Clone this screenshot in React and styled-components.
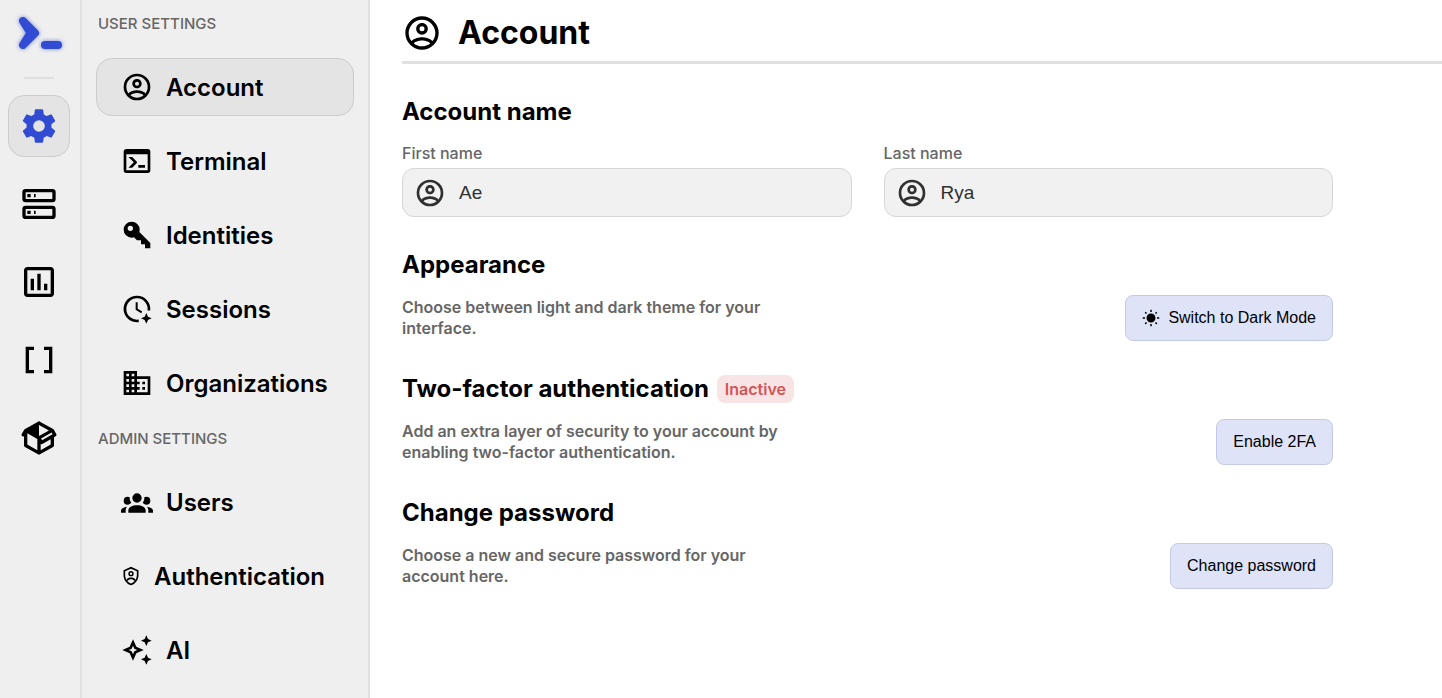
import React from 'react'
import styled, { createGlobalStyle } from 'styled-components';

const icons = {
    account: 'M12,2A10,10 0 0,0 2,12A10,10 0 0,0 12,22A10,10 0 0,0 22,12A10,10 0 0,0 12,2M7.07,18.28C7.5,17.38 10.12,16.5 12,16.5C13.88,16.5 16.5,17.38 16.93,18.28C15.57,19.36 13.86,20 12,20C10.14,20 8.43,19.36 7.07,18.28M18.36,16.83C16.93,15.09 13.46,14.5 12,14.5C10.54,14.5 7.07,15.09 5.64,16.83C4.62,15.5 4,13.82 4,12C4,7.59 7.59,4 12,4C16.41,4 20,7.59 20,12C20,13.82 19.38,15.5 18.36,16.83M12,6C10.06,6 8.5,7.56 8.5,9.5C8.5,11.44 10.06,13 12,13C13.94,13 15.5,11.44 15.5,9.5C15.5,7.56 13.94,6 12,6M12,11A1.5,1.5 0 0,1 10.5,9.5A1.5,1.5 0 0,1 12,8A1.5,1.5 0 0,1 13.5,9.5A1.5,1.5 0 0,1 12,11Z',
    terminal: 'M20,19V7H4V19H20M20,3A2,2 0 0,1 22,5V19A2,2 0 0,1 20,21H4A2,2 0 0,1 2,19V5C2,3.89 2.9,3 4,3H20M13,17V15H18V17H13M9.58,13L5.57,9H8.4L11.7,12.3C12.09,12.69 12.09,13.33 11.7,13.72L8.42,17H5.59L9.58,13Z',
    key: 'M22,18V22H18V19H15V16H12L9.74,13.74C9.19,13.91 8.61,14 8,14A6,6 0 0,1 2,8A6,6 0 0,1 8,2A6,6 0 0,1 14,8C14,8.61 13.91,9.19 13.74,9.74L22,18M7,5A2,2 0 0,0 5,7A2,2 0 0,0 7,9A2,2 0 0,0 9,7A2,2 0 0,0 7,5Z',
    session: 'M12,2A10,10 0 0,1 21.9,13.2H19.9A8,8 0 1,0 13.3,19.9V21.9A10,10 0 1,1 12,2M11,7H12.5V11.8L15.9,13.8L15.1,15.1L11,12.6V7M19,15L20.25,17.75L23,19L20.25,20.25L19,23L17.75,20.25L15,19L17.75,17.75Z',
    organization: 'M18,15H16V17H18M18,11H16V13H18M20,19H12V17H14V15H12V13H14V11H12V9H20M10,7H8V5H10M10,11H8V9H10M10,15H8V13H10M10,19H8V17H10M6,7H4V5H6M6,11H4V9H6M6,15H4V13H6M6,19H4V17H6M12,7V3H2V21H22V7H12Z',
    users: 'M12,5.5A3.5,3.5 0 0,1 15.5,9A3.5,3.5 0 0,1 12,12.5A3.5,3.5 0 0,1 8.5,9A3.5,3.5 0 0,1 12,5.5M5,8C5.56,8 6.08,8.15 6.53,8.42C6.38,9.85 6.8,11.27 7.66,12.38C7.16,13.34 6.16,14 5,14A3,3 0 0,1 2,11A3,3 0 0,1 5,8M19,8A3,3 0 0,1 22,11A3,3 0 0,1 19,14C17.84,14 16.84,13.34 16.34,12.38C17.2,11.27 17.62,9.85 17.47,8.42C17.92,8.15 18.44,8 19,8M5.5,18.25C5.5,16.18 8.41,14.5 12,14.5C15.59,14.5 18.5,16.18 18.5,18.25V20H5.5V18.25M0,20V18.5C0,17.11 1.89,15.94 4.45,15.6C3.86,16.28 3.5,17.22 3.5,18.25V20H0M24,20H20.5V18.25C20.5,17.22 20.14,16.28 19.55,15.6C22.11,15.94 24,17.11 24,18.5V20Z',
    shield: 'M21,11C21,16.55 17.16,21.74 12,23C6.84,21.74 3,16.55 3,11V5L12,1L21,5V11M12,21C15.75,20 19,15.54 19,11.22V6.3L12,3.18L5,6.3V11.22C5,15.54 8.25,20 12,21M12,6A3.2,3.2 0 0,1 15.2,9.2A3.2,3.2 0 0,1 12,12.4A3.2,3.2 0 0,1 8.8,9.2A3.2,3.2 0 0,1 12,6M12,7.8A1.4,1.4 0 0,0 10.6,9.2A1.4,1.4 0 0,0 12,10.6A1.4,1.4 0 0,0 13.4,9.2A1.4,1.4 0 0,0 12,7.8M6.8,16.2C7.6,14.6 10,13.8 12,13.8C14,13.8 16.4,14.6 17.2,16.2L16,17.9C15.2,16.6 13.8,15.8 12,15.8C10.2,15.8 8.8,16.6 8,17.9Z',
    sparkle: 'M19,1L17.74,3.75L15,5L17.74,6.26L19,9L20.25,6.26L23,5L20.25,3.75M9,4L6.5,9.5L1,12L6.5,14.5L9,20L11.5,14.5L17,12L11.5,9.5M9,8.83L10,11L12.17,12L10,13L9,15.17L8,13L5.83,12L8,11M19,15L17.74,17.74L15,19L17.74,20.25L19,23L20.25,20.25L23,19L20.25,17.74Z',
    cog: 'M12,15.5A3.5,3.5 0 0,1 8.5,12A3.5,3.5 0 0,1 12,8.5A3.5,3.5 0 0,1 15.5,12A3.5,3.5 0 0,1 12,15.5M19.43,12.97C19.47,12.65 19.5,12.33 19.5,12C19.5,11.67 19.47,11.34 19.43,11L21.54,9.37C21.73,9.22 21.78,8.95 21.66,8.73L19.66,5.27C19.54,5.05 19.27,4.96 19.05,5.05L16.56,6.05C16.04,5.66 15.5,5.32 14.87,5.07L14.5,2.42C14.46,2.18 14.25,2 14,2H10C9.75,2 9.54,2.18 9.5,2.42L9.13,5.07C8.5,5.32 7.96,5.66 7.44,6.05L4.95,5.05C4.73,4.96 4.46,5.05 4.34,5.27L2.34,8.73C2.21,8.95 2.27,9.22 2.46,9.37L4.57,11C4.53,11.34 4.5,11.67 4.5,12C4.5,12.33 4.53,12.65 4.57,12.97L2.46,14.63C2.27,14.78 2.21,15.05 2.34,15.27L4.34,18.73C4.46,18.95 4.73,19.03 4.95,18.95L7.44,17.94C7.96,18.34 8.5,18.68 9.13,18.93L9.5,21.58C9.54,21.82 9.75,22 10,22H14C14.25,22 14.46,21.82 14.5,21.58L14.87,18.93C15.5,18.67 16.04,18.34 16.56,17.94L19.05,18.95C19.27,19.03 19.54,18.95 19.66,18.73L21.66,15.27C21.78,15.05 21.73,14.78 21.54,14.63L19.43,12.97Z',
    server: 'M4,3H20A2,2 0 0,1 22,5V9A2,2 0 0,1 20,11H4A2,2 0 0,1 2,9V5A2,2 0 0,1 4,3M4,5V9H20V5M5,6H7V8H5M9,6H10V8H9M4,13H20A2,2 0 0,1 22,15V19A2,2 0 0,1 20,21H4A2,2 0 0,1 2,19V15A2,2 0 0,1 4,13M4,15V19H20V15M5,16H7V18H5M9,16H10V18H9Z',
    chart: 'M9,17H7V10H9V17M13,17H11V7H13V17M17,17H15V13H17V17M19,19H5V5H19V19M19,3H5C3.9,3 3,3.9 3,5V19C3,20.1 3.9,21 5,21H19C20.1,21 21,20.1 21,19V5C21,3.9 20.1,3 19,3Z',
    brackets: 'M15,4V6H18V18H15V20H20V4M4,4V20H9V18H6V6H9V4H4Z',
    box: 'M2,10.96C1.5,10.68 1.35,10.07 1.63,9.59L3.13,7C3.24,6.8 3.41,6.66 3.6,6.58L11.43,2.18C11.59,2.06 11.79,2 12,2C12.21,2 12.41,2.06 12.57,2.18L20.47,6.62C20.66,6.72 20.82,6.88 20.91,7.08L22.36,9.6C22.64,10.08 22.47,10.69 22,10.96L21,11.54V16.5C21,16.88 20.79,17.21 20.47,17.38L12.57,21.82C12.41,21.94 12.21,22 12,22C11.79,22 11.59,21.94 11.43,21.82L3.53,17.38C3.21,17.21 3,16.88 3,16.5V10.96C2.7,11.13 2.32,11.14 2,10.96M12,4.15L12,10.85L17.96,7.5L12,4.15M5,15.91L11,19.29V12.58L5,9.21V15.91M19,15.91V12.69L14,15.59C13.67,15.77 13.3,15.76 13,15.6V19.29L19,15.91M13.85,13.36L20.13,9.73L19.55,8.72L13.27,12.35L13.85,13.36Z',
    sun: 'M3.55,19.09L4.96,20.5L6.76,18.71L5.34,17.29M12,6C8.69,6 6,8.69 6,12S8.69,18 12,18 18,15.31 18,12C18,8.68 15.31,6 12,6M20,13H23V11H20M17.24,18.71L19.04,20.5L20.45,19.09L18.66,17.29M20.45,5L19.04,3.6L17.24,5.39L18.66,6.81M13,1H11V4H13M6.76,5.39L4.96,3.6L3.55,5L5.34,6.81L6.76,5.39M1,13H4V11H1M13,20H11V23H13',
}

const railItems = [
    { icon: 'cog', label: 'Settings', active: true },
    { icon: 'server', label: 'Servers' },
    { icon: 'chart', label: 'Monitoring' },
    { icon: 'brackets', label: 'Snippets' },
    { icon: 'box', label: 'Apps' },
]

const userPages = [
    { icon: 'account', label: 'Account', active: true },
    { icon: 'terminal', label: 'Terminal' },
    { icon: 'key', label: 'Identities' },
    { icon: 'session', label: 'Sessions' },
    { icon: 'organization', label: 'Organizations' },
]

const adminPages = [
    { icon: 'users', label: 'Users' },
    { icon: 'shield', label: 'Authentication', iconSize: 20 },
    { icon: 'sparkle', label: 'AI' },
]

function Icon({ name, size = 32 }) {
    return (
        <StyledIcon viewBox="0 0 24 24" width={size} height={size} aria-hidden="true">
            <path fillRule="evenodd" d={icons[name]} />
        </StyledIcon>
    )
}

function Logo() {
    return (
        <StyledLogo viewBox="0 0 48 48" width="48" height="48" aria-hidden="true">
            <path d="M8,11L20,23L8,35L15.5,23Z" />
            <path d="M30,35H43" />
        </StyledLogo>
    )
}

function PageGroup({ title, pages }) {
    return (
        <div>
            <GroupTitle>{title}</GroupTitle>
            <PageList>
                {pages.map((page) => (
                    <PageLink key={page.label} href="#" $active={page.active}>
                        <Icon name={page.icon} size={page.iconSize} />
                        <span>{page.label}</span>
                    </PageLink>
                ))}
            </PageList>
        </div>
    )
}

function NameField({ id, label, value }) {
    return (
        <Field>
            <label htmlFor={id}>{label}</label>
            <InputBox>
                <Icon name="account" />
                <input id={id} type="text" defaultValue={value} />
            </InputBox>
        </Field>
    )
}

function Setting({ title, badge, text, icon, action }) {
    return (
        <section>
            <SectionTitle>
                {title}
                {badge && <Badge>{badge}</Badge>}
            </SectionTitle>
            <SettingRow>
                <p>{text}</p>
                <Button type="button">
                    {icon && <Icon name={icon} size={18} />}
                    {action}
                </Button>
            </SettingRow>
        </section>
    )
}

function App() {
    return (
        <Layout>
            <GlobalStyle />
            <Rail>
                <Logo />
                <Divider />
                {railItems.map((item) => (
                    <RailButton key={item.label} type="button" aria-label={item.label} $active={item.active}>
                        <Icon name={item.icon} size={40} />
                    </RailButton>
                ))}
            </Rail>
            <Sidebar>
                <PageGroup title="USER SETTINGS" pages={userPages} />
                <PageGroup title="ADMIN SETTINGS" pages={adminPages} />
            </Sidebar>
            <Main>
                <Header>
                    <Icon name="account" size={40} />
                    <h1>Account</h1>
                </Header>
                <Content>
                    <section>
                        <SectionTitle>Account name</SectionTitle>
                        <Fields>
                            <NameField id="first-name" label="First name" value="Ae" />
                            <NameField id="last-name" label="Last name" value="Rya" />
                        </Fields>
                    </section>
                    <Setting
                        title="Appearance"
                        text="Choose between light and dark theme for your interface."
                        icon="sun"
                        action="Switch to Dark Mode"
                    />
                    <Setting
                        title="Two-factor authentication"
                        badge="Inactive"
                        text="Add an extra layer of security to your account by enabling two-factor authentication."
                        action="Enable 2FA"
                    />
                    <Setting
                        title="Change password"
                        text="Choose a new and secure password for your account here."
                        action="Change password"
                    />
                </Content>
            </Main>
        </Layout>
    )
}

const GlobalStyle = createGlobalStyle`
  * {
    box-sizing: border-box;
  }
  body {
    margin: 0;
    background: #fff;
    color: #000;
    font-family: Inter, "Liberation Sans", sans-serif;
  }
  h1, h2, p {
    margin: 0;
  }
`

const Layout = styled.div`
  display: flex;
  min-height: 100vh;
`

const StyledIcon = styled.svg`
  display: block;
  flex-shrink: 0;
  fill: currentColor;
`

const StyledLogo = styled.svg`
  display: block;
  fill: #314bd3;
  stroke: #314bd3;
  stroke-width: 8;
  stroke-linecap: round;
  stroke-linejoin: round;
  filter: drop-shadow(0 0 2px #314bd3aa);
`

const Rail = styled.nav`
  display: flex;
  flex-direction: column;
  align-items: center;
  flex-shrink: 0;
  gap: 16px;
  width: 82px;
  padding: 10px 10px 16px 8px;
  background: #efefef;
  border-right: 2px solid #e0e0e0;
`

const Divider = styled.div`
  width: 30px;
  height: 2px;
  margin-top: 3px;
  background: #e0e0e0;
`

const RailButton = styled.button`
  display: flex;
  align-items: center;
  justify-content: center;
  width: 62px;
  height: 62px;
  padding: 0;
  border: 1px solid ${(props) => (props.$active ? '#cccccc' : 'transparent')};
  border-radius: 16px;
  background: ${(props) => (props.$active ? '#e4e4e4' : 'transparent')};
  color: ${(props) => (props.$active ? '#314bd3' : '#000')};
`

const Sidebar = styled.aside`
  display: flex;
  flex-direction: column;
  flex-shrink: 0;
  gap: 16px;
  width: 288px;
  padding: 13px 14px;
  background: #efefef;
  border-right: 2px solid #e0e0e0;
`

const GroupTitle = styled.h2`
  margin: 0 2px 23px;
  color: #666;
  font-size: 15px;
  font-weight: 500;
  line-height: 22px;
`

const PageList = styled.nav`
  display: flex;
  flex-direction: column;
  gap: 16px;
`

const PageLink = styled.a`
  display: flex;
  align-items: center;
  gap: 13px;
  height: 58px;
  padding: 0 24px;
  border: 1px solid ${(props) => (props.$active ? '#cccccc' : 'transparent')};
  border-radius: 16px;
  background: ${(props) => (props.$active ? '#e4e4e4' : 'transparent')};
  color: #000;
  font-size: 24px;
  font-weight: 600;
  text-decoration: none;
`

const Main = styled.main`
  flex: 1;
  min-width: 0;
  padding: 13px 0 32px 32px;
`

const Header = styled.header`
  display: flex;
  align-items: center;
  gap: 16px;
  padding-bottom: 8px;
  border-bottom: 3px solid #e0e0e0;
    h1{
        font-size: 32px;
        font-weight: 700;
        line-height: 40px;
    }
`

const Content = styled.div`
  display: flex;
  flex-direction: column;
  gap: 33px;
  padding: 33px 109px 0 0;
`

const SectionTitle = styled.h2`
  display: flex;
  align-items: center;
  gap: 8px;
  margin-bottom: 15px;
  font-size: 24px;
  font-weight: 700;
  line-height: 30px;
`

const Badge = styled.span`
  padding: 4px 8px;
  border-radius: 8px;
  background: #f9e4e5;
  color: #d35555;
  font-size: 16px;
  font-weight: 600;
  line-height: 20px;
`

const Fields = styled.div`
  display: grid;
  grid-template-columns: 1fr 1fr;
  gap: 32px;
`

const Field = styled.div`
  display: flex;
  flex-direction: column;
  gap: 4px;
    label{
        color: #666;
        font-size: 16px;
        font-weight: 500;
        line-height: 22px;
    }
`

const InputBox = styled.div`
  display: flex;
  align-items: center;
  gap: 13px;
  height: 49px;
  padding: 0 11px;
  border: 1px solid #d6d6d6;
  border-radius: 12px;
  background: #f1f1f1;
  color: #303030;
    input{
        flex: 1;
        min-width: 0;
        padding: 0;
        border: none;
        outline: none;
        background: transparent;
        color: inherit;
        font-family: "Liberation Sans", Arial, sans-serif;
        font-size: 19px;
    }
`

const SettingRow = styled.div`
  display: flex;
  align-items: center;
  justify-content: space-between;
  gap: 32px;
    p{
        max-width: 400px;
        color: #666;
        font-size: 16px;
        font-weight: 600;
        line-height: 21px;
    }
`

const Button = styled.button`
  display: flex;
  align-items: center;
  flex-shrink: 0;
  gap: 8px;
  height: 46px;
  padding: 0 16px;
  border: 1px solid #c5cae4;
  border-radius: 8px;
  background: #dfe3f8;
  color: #000;
  font-family: "Liberation Sans", Arial, sans-serif;
  font-size: 16px;
`

export default App;
